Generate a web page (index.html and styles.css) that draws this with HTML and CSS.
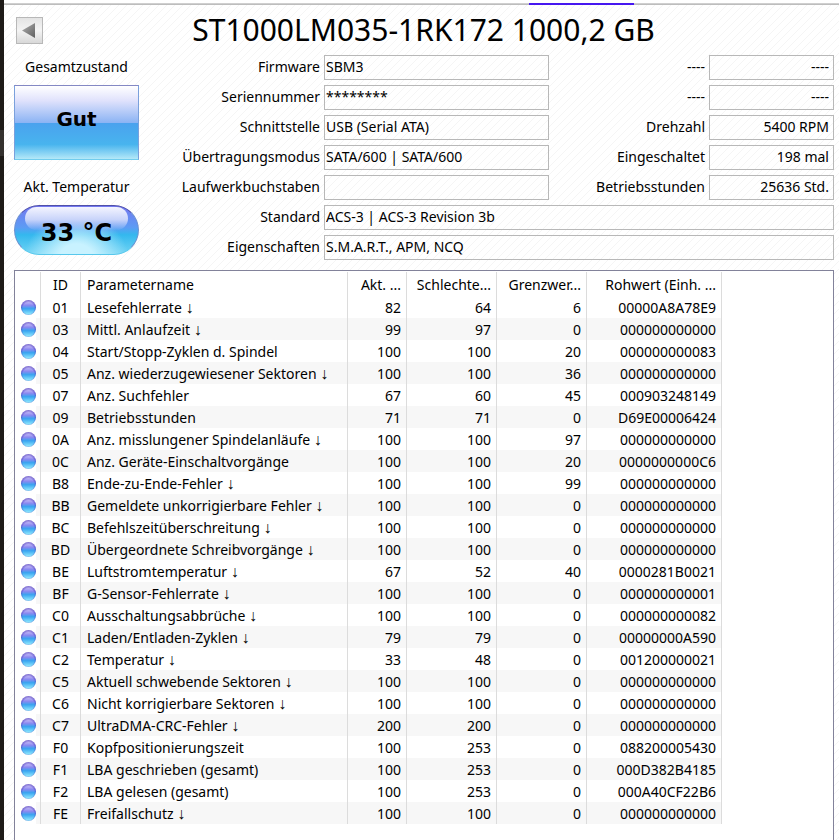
FILE: index.html
```html
<!DOCTYPE html>
<html lang="de">
  <head>
    <title>ST1000LM035-1RK172 1000,2 GB</title>
    <meta charset="UTF-8" />
    <meta name="viewport" content="width=device-width, initial-scale=1.0" />
    <link rel="stylesheet" href="styles.css">
  </head>
  <body>
    <div class="edge"></div>
    <div class="window">
      <div class="tab-strip"><div class="active-tab"></div></div>

      <div class="top">
        <button class="back-button" type="button" aria-label="Zurück">
          <svg width="15" height="17" viewBox="0 0 15 17">
            <defs>
              <linearGradient id="arrow" x1="0" y1="0" x2="1" y2="1">
                <stop offset="0" stop-color="#b0b0b0" />
                <stop offset="1" stop-color="#606060" />
              </linearGradient>
            </defs>
            <path d="M0 8.5 13 1V16Z" fill="url(#arrow)" />
          </svg>
        </button>
        <h1>ST1000LM035-1RK172 1000,2 GB</h1>
      </div>

      <div class="overview">
        <div class="status">
          <span class="caption">Gesamtzustand</span>
          <button class="health" type="button">Gut</button>
          <span class="caption">Akt. Temperatur</span>
          <button class="temperature" type="button">33 °C</button>
        </div>

        <form class="info">
          <label for="firmware">Firmware</label>
          <input type="text" id="firmware" value="SBM3" readonly />
          <label for="extra1">----</label>
          <input type="text" id="extra1" class="number" value="----" readonly />

          <label for="serial">Seriennummer</label>
          <input type="text" id="serial" value="********" readonly />
          <label for="extra2">----</label>
          <input type="text" id="extra2" class="number" value="----" readonly />

          <label for="interface">Schnittstelle</label>
          <input type="text" id="interface" value="USB (Serial ATA)" readonly />
          <label for="rpm">Drehzahl</label>
          <input type="text" id="rpm" class="number" value="5400 RPM" readonly />

          <label for="mode">Übertragungsmodus</label>
          <input type="text" id="mode" value="SATA/600 | SATA/600" readonly />
          <label for="power">Eingeschaltet</label>
          <input type="text" id="power" class="number" value="198 mal" readonly />

          <label for="letters">Laufwerkbuchstaben</label>
          <input type="text" id="letters" value="" readonly />
          <label for="hours">Betriebsstunden</label>
          <input type="text" id="hours" class="number" value="25636 Std." readonly />

          <label for="standard">Standard</label>
          <input type="text" id="standard" class="wide" value="ACS-3 | ACS-3 Revision 3b" readonly />

          <label for="features">Eigenschaften</label>
          <input type="text" id="features" class="wide" value="S.M.A.R.T., APM, NCQ" readonly />
        </form>
      </div>

      <div class="smart">
        <table>
          <colgroup>
            <col class="col-dot" />
            <col class="col-id" />
            <col class="col-name" />
            <col class="col-current" />
            <col class="col-value" />
            <col class="col-value" />
            <col class="col-raw" />
          </colgroup>
          <thead>
            <tr><th></th><th>ID</th><th>Parametername</th><th>Akt. ...</th><th>Schlechte...</th><th>Grenzwer...</th><th>Rohwert (Einh. ...</th></tr>
          </thead>
          <tbody>
            <tr><td><i class="dot"></i></td><td>01</td><td>Lesefehlerrate <span class="down">↓</span></td><td>82</td><td>64</td><td>6</td><td>00000A8A78E9</td></tr>
            <tr><td><i class="dot"></i></td><td>03</td><td>Mittl. Anlaufzeit <span class="down">↓</span></td><td>99</td><td>97</td><td>0</td><td>000000000000</td></tr>
            <tr><td><i class="dot"></i></td><td>04</td><td>Start/Stopp-Zyklen d. Spindel</td><td>100</td><td>100</td><td>20</td><td>000000000083</td></tr>
            <tr><td><i class="dot"></i></td><td>05</td><td>Anz. wiederzugewiesener Sektoren <span class="down">↓</span></td><td>100</td><td>100</td><td>36</td><td>000000000000</td></tr>
            <tr><td><i class="dot"></i></td><td>07</td><td>Anz. Suchfehler</td><td>67</td><td>60</td><td>45</td><td>000903248149</td></tr>
            <tr><td><i class="dot"></i></td><td>09</td><td>Betriebsstunden</td><td>71</td><td>71</td><td>0</td><td>D69E00006424</td></tr>
            <tr><td><i class="dot"></i></td><td>0A</td><td>Anz. misslungener Spindelanläufe <span class="down">↓</span></td><td>100</td><td>100</td><td>97</td><td>000000000000</td></tr>
            <tr><td><i class="dot"></i></td><td>0C</td><td>Anz. Geräte-Einschaltvorgänge</td><td>100</td><td>100</td><td>20</td><td>0000000000C6</td></tr>
            <tr><td><i class="dot"></i></td><td>B8</td><td>Ende-zu-Ende-Fehler <span class="down">↓</span></td><td>100</td><td>100</td><td>99</td><td>000000000000</td></tr>
            <tr><td><i class="dot"></i></td><td>BB</td><td>Gemeldete unkorrigierbare Fehler <span class="down">↓</span></td><td>100</td><td>100</td><td>0</td><td>000000000000</td></tr>
            <tr><td><i class="dot"></i></td><td>BC</td><td>Befehlszeitüberschreitung <span class="down">↓</span></td><td>100</td><td>100</td><td>0</td><td>000000000000</td></tr>
            <tr><td><i class="dot"></i></td><td>BD</td><td>Übergeordnete Schreibvorgänge <span class="down">↓</span></td><td>100</td><td>100</td><td>0</td><td>000000000000</td></tr>
            <tr><td><i class="dot"></i></td><td>BE</td><td>Luftstromtemperatur <span class="down">↓</span></td><td>67</td><td>52</td><td>40</td><td>0000281B0021</td></tr>
            <tr><td><i class="dot"></i></td><td>BF</td><td>G-Sensor-Fehlerrate <span class="down">↓</span></td><td>100</td><td>100</td><td>0</td><td>000000000001</td></tr>
            <tr><td><i class="dot"></i></td><td>C0</td><td>Ausschaltungsabbrüche <span class="down">↓</span></td><td>100</td><td>100</td><td>0</td><td>000000000082</td></tr>
            <tr><td><i class="dot"></i></td><td>C1</td><td>Laden/Entladen-Zyklen <span class="down">↓</span></td><td>79</td><td>79</td><td>0</td><td>00000000A590</td></tr>
            <tr><td><i class="dot"></i></td><td>C2</td><td>Temperatur <span class="down">↓</span></td><td>33</td><td>48</td><td>0</td><td>001200000021</td></tr>
            <tr><td><i class="dot"></i></td><td>C5</td><td>Aktuell schwebende Sektoren <span class="down">↓</span></td><td>100</td><td>100</td><td>0</td><td>000000000000</td></tr>
            <tr><td><i class="dot"></i></td><td>C6</td><td>Nicht korrigierbare Sektoren <span class="down">↓</span></td><td>100</td><td>100</td><td>0</td><td>000000000000</td></tr>
            <tr><td><i class="dot"></i></td><td>C7</td><td>UltraDMA-CRC-Fehler <span class="down">↓</span></td><td>200</td><td>200</td><td>0</td><td>000000000000</td></tr>
            <tr><td><i class="dot"></i></td><td>F0</td><td>Kopfpositionierungszeit</td><td>100</td><td>253</td><td>0</td><td>088200005430</td></tr>
            <tr><td><i class="dot"></i></td><td>F1</td><td>LBA geschrieben (gesamt)</td><td>100</td><td>253</td><td>0</td><td>000D382B4185</td></tr>
            <tr><td><i class="dot"></i></td><td>F2</td><td>LBA gelesen (gesamt)</td><td>100</td><td>253</td><td>0</td><td>000A40CF22B6</td></tr>
            <tr><td><i class="dot"></i></td><td>FE</td><td>Freifallschutz <span class="down">↓</span></td><td>100</td><td>100</td><td>0</td><td>000000000000</td></tr>
          </tbody>
        </table>
      </div>
    </div>
  </body>
</html>
```
FILE: styles.css
```css
* {
  box-sizing: border-box;
}

body {
  margin: 0;
  min-height: 100vh;
  display: flex;
  background-color: white;
  color: black;
  font-family: "Noto Sans", sans-serif;
  font-size: 14px;
  line-height: 20px;
}

input,
button {
  font: inherit;
  color: inherit;
}

/* dark strip of the desktop at the left */
.edge {
  width: 4px;
  background: linear-gradient(#1e1b18 130px, #34312e 130px, #34312e 156px, #1e1b18 156px);
}

.window {
  flex: 1;
  display: flex;
  flex-direction: column;
  background: linear-gradient(to bottom right, white 44%, #f5f5f5 50%, white 56%);
  background-size: 8px 8px;
}

.tab-strip {
  height: 5px;
  padding-top: 3px;
  background: linear-gradient(white 3px, #d8d8d8 3px, #b4b4b4 5px);
}

.active-tab {
  width: 105px;
  height: 2px;
  margin-left: 525px;
  background-color: #4617f0;
}

.top {
  display: flex;
  align-items: flex-start;
  height: 45px;
  padding: 12px 5px 0 12px;
}

.back-button {
  width: 27px;
  height: 27px;
  padding: 0;
  display: flex;
  align-items: center;
  justify-content: center;
  border: 1px solid #b8b8b8;
  background: linear-gradient(#e4e4e4, #f4f4f4 50%, #d8d8d8);
}

h1 {
  flex: 1;
  margin: 0 30px 0 0;
  font-size: 30px;
  font-weight: normal;
  line-height: 26px;
  text-align: center;
}

.overview {
  display: flex;
  padding: 5px 5px 0 10px;
}

.status {
  width: 125px;
  display: flex;
  flex-direction: column;
}

.caption {
  height: 30px;
  line-height: 24px;
  text-align: center;
}

.health {
  height: 75px;
  margin-bottom: 15px;
  padding: 0 0 8px;
  border: 1px solid;
  border-color: #8488c4 #7aa0dc #72cdee;
  background: linear-gradient(#ffffff, #e0e2fc 20%, #8cb4f4 50%, #4aa2ee 51%, #48b4ee 80%, #b4e8f8);
  font-family: "DejaVu Sans", sans-serif;
  font-size: 20px;
  font-weight: bold;
}

.temperature {
  height: 50px;
  padding: 5px 0 0;
  border: 1px solid;
  border-color: #5050a8 #6a90d0 #58c8ec;
  border-radius: 25px;
  background:
    radial-gradient(ellipse at 50% 110%, #c8f2ff 20%, rgba(160, 230, 250, 0) 60%),
    linear-gradient(#7478f0, #5c9cf4 45%, #34b8ee 60%, #70d4f4);
  font-family: "DejaVu Sans", sans-serif;
  font-size: 24px;
  font-weight: bold;
  position: relative;
  z-index: 0;
}

/* glass highlight */
.temperature::before {
  content: "";
  position: absolute;
  z-index: -1;
  top: 1px;
  left: 10px;
  right: 10px;
  height: 23px;
  border-radius: 14px;
  background: linear-gradient(#f4f4ff, #c8d4fa 55%, rgba(110, 180, 245, 0.2));
}

.info {
  flex: 1;
  display: grid;
  grid-template-columns: 181px 225px 1fr 125px;
  grid-auto-rows: 25px;
  gap: 5px 4px;
}

.info label {
  line-height: 24px;
  text-align: right;
}

.info input {
  width: 100%;
  min-width: 0;
  padding: 0 4px 1px 1px;
  border: 1px solid #b8b8b8;
  background-color: transparent;
}

.info .number {
  text-align: right;
}

.info .wide {
  grid-column: 2 / 5;
}

.smart {
  flex: 1;
  margin: 10px 5px 0 10px;
  padding-top: 1px;
  border: 1px solid #82829a;
  border-bottom: none;
  background-color: white;
}

table {
  width: 707px;
  table-layout: fixed;
  border-collapse: separate;
  border-spacing: 0;
}

.col-dot {
  width: 26px;
}

.col-id {
  width: 40px;
}

.col-name {
  width: 267px;
}

.col-current {
  width: 59px;
}

.col-value {
  width: 90px;
}

.col-raw {
  width: 135px;
}

th,
td {
  height: 22px;
  padding: 2px 5px 0 0;
  border-right: 1px solid #dcdcdc;
  font-weight: normal;
  text-align: right;
  white-space: nowrap;
}

th {
  height: 24px;
}

td:first-child {
  padding: 0;
}

th:nth-child(2),
td:nth-child(2) {
  padding-right: 0;
  text-align: center;
}

th:nth-child(3),
td:nth-child(3) {
  padding-right: 0;
  padding-left: 6px;
  text-align: left;
}

tbody tr:nth-child(even) td {
  background-color: #f7f7f7;
}

tbody tr:nth-child(even) td:first-child {
  background: linear-gradient(to right, white 21px, #f7f7f7 21px);
}

.dot {
  display: block;
  width: 15px;
  height: 15px;
  margin: 0 0 0 6px;
  border-radius: 50%;
  background:
    radial-gradient(circle at 50% 55%, rgba(60, 40, 180, 0) 50%, rgba(60, 40, 180, 0.6) 72%),
    linear-gradient(#e0d4f8, #8c88f0 35%, #38a4f0 58%, #98f0ff);
}

.down {
  font-family: "Liberation Serif", serif;
  font-size: 16px;
  line-height: 16px;
}
```
